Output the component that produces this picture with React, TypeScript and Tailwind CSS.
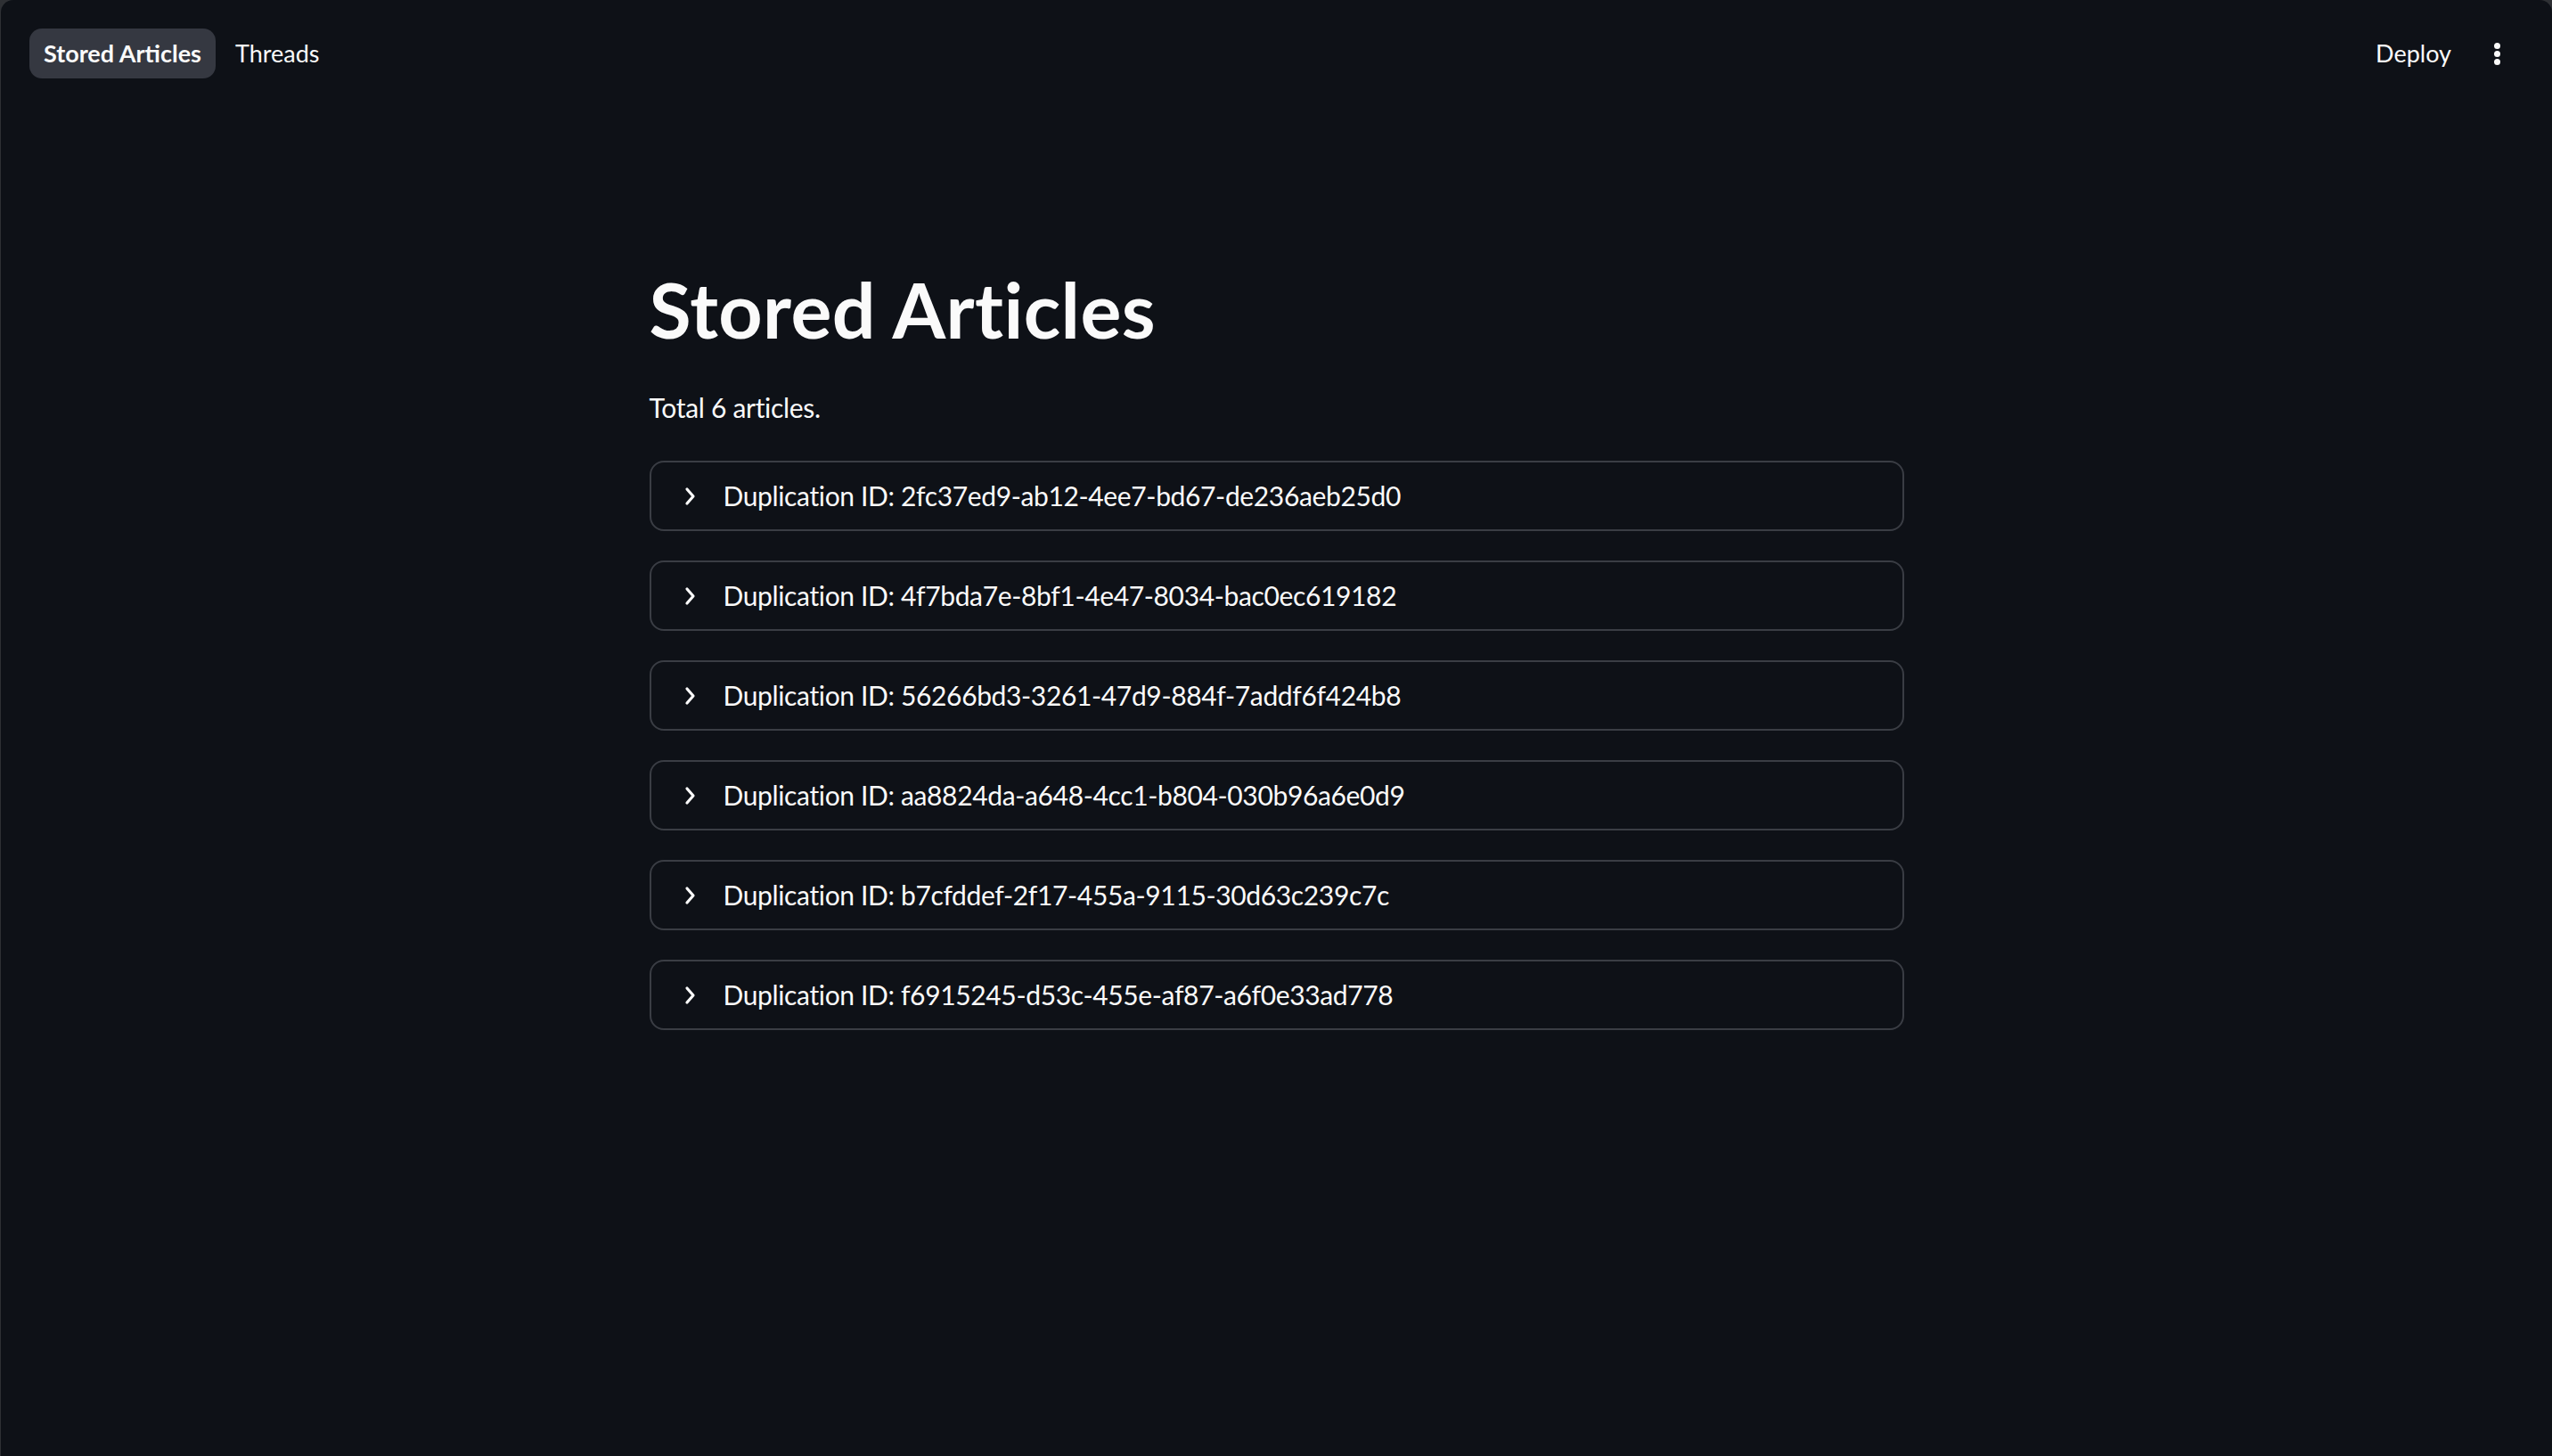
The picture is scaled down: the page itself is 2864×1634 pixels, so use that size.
import React from 'react'

const ids = [
  '2fc37ed9-ab12-4ee7-bd67-de236aeb25d0',
  '4f7bda7e-8bf1-4e47-8034-bac0ec619182',
  '56266bd3-3261-47d9-884f-7addf6f424b8',
  'aa8824da-a648-4cc1-b804-030b96a6e0d9',
  'b7cfddef-2f17-455a-9115-30d63c239c7c',
  'f6915245-d53c-455e-af87-a6f0e33ad778',
]

const Chevron = () => (
  <svg width="14" height="22" viewBox="0 0 14 22" fill="none">
    <path d="M3 3l7 8-7 8" stroke="#fafafa" strokeWidth="3.2" strokeLinecap="round" strokeLinejoin="round" />
  </svg>
)

const Expander: React.FC<{ id: string }> = ({ id }) => {
  return (
    <div className="w-full h-[79px] border-2 border-[#3a3d44] rounded-[16px] flex flex-row items-center pl-[37px]">
      <Chevron />
      <span className="ml-[30px] text-[30px] tracking-[-0.012em] text-[#fafafa]">Duplication ID: {id}</span>
    </div>
  )
}

export default function App() {
  return (
    <div className="w-full h-[1634px] bg-[#2e3034] pl-px" style={{ fontFamily: 'Lato, "Noto Sans", sans-serif' }}>
      <div className="w-full h-full bg-[#0e1117] rounded-tl-[14px] rounded-tr-[14px] overflow-hidden flex flex-col">
        <div className="flex flex-row items-start justify-between h-[120px] pt-[32px] pl-[32px] pr-[58px]">
          <div className="flex flex-row items-center gap-[14px]">
            <button className="h-[56px] px-[16px] rounded-[14px] bg-[#353841] text-[#fafafa] text-[27px] font-bold">Stored Articles</button>
            <button className="h-[56px] px-[8px] text-[#fafafa] text-[27px]">Threads</button>
          </div>
          <div className="flex flex-row items-center h-[56px] gap-[48px]">
            <span className="text-[27px] text-[#fafafa]">Deploy</span>
            <div className="flex flex-col gap-[2px]">
              <div className="w-[7px] h-[7px] rounded-full bg-[#fafafa]" />
              <div className="w-[7px] h-[7px] rounded-full bg-[#fafafa]" />
              <div className="w-[7px] h-[7px] rounded-full bg-[#fafafa]" />
            </div>
          </div>
        </div>
        <div className="w-[1408px] mx-auto pt-[175px]">
          <h1 className="text-[86px] font-bold text-[#fafafa] leading-[1.2] tracking-[0.005em]">Stored Articles</h1>
          <p className="text-[30px] tracking-[-0.01em] text-[#fafafa] mt-[37px] mb-[37px]">Total 6 articles.</p>
          <div className="flex flex-col gap-[33px]">
            {ids.map((id) => (
              <Expander key={id} id={id} />
            ))}
          </div>
        </div>
      </div>
    </div>
  )
}
